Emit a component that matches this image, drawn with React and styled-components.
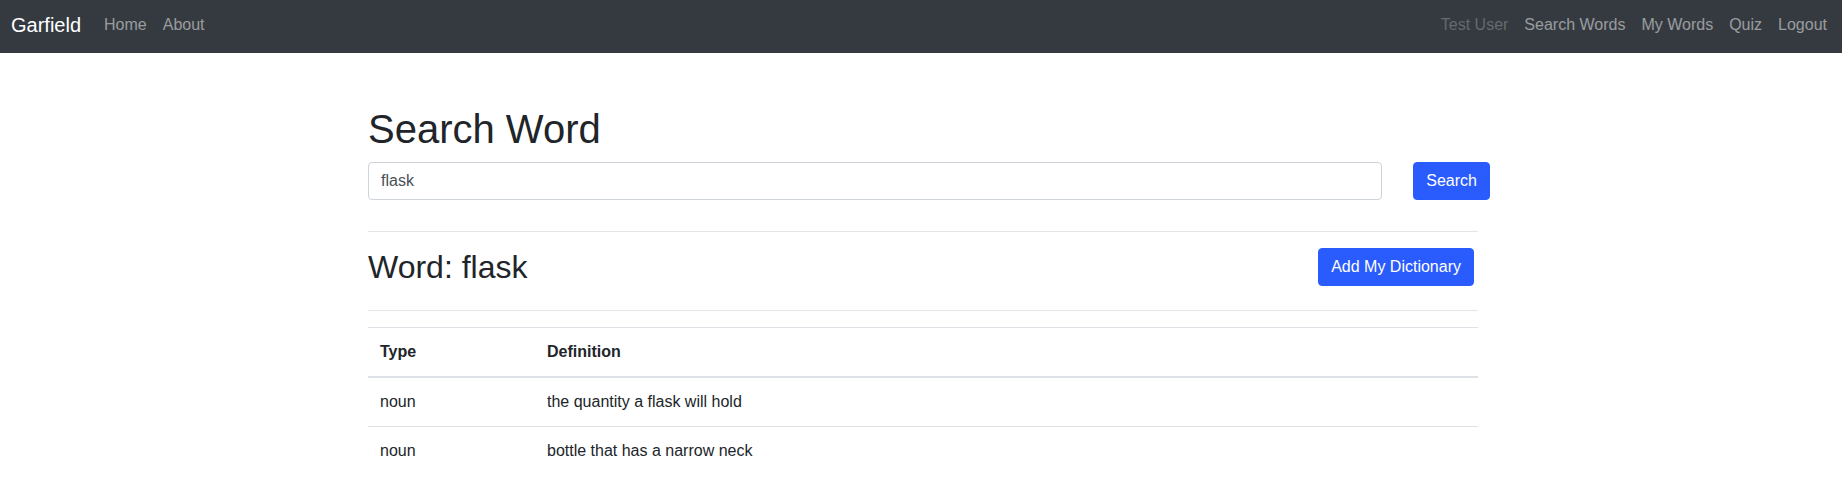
import styled, { createGlobalStyle } from "styled-components";

const GlobalStyle = createGlobalStyle`
    html, body {
        margin: 0;
        padding: 0;
        background: #fff;
        font-family: "Liberation Sans", Arial, sans-serif;
        font-size: 16px;
        line-height: 1.5;
        color: #212529;
    }
    * {
        box-sizing: border-box;
    }
`;

const definitions = [
    { type: "noun", text: "the quantity a flask will hold" },
    { type: "noun", text: "bottle that has a narrow neck" },
];

const App = () => {
    return (
        <>
            <GlobalStyle />
            <Navbar>
                <Brand href="#">Garfield</Brand>
                <NavList>
                    <NavLink href="#">Home</NavLink>
                    <NavLink href="#">About</NavLink>
                </NavList>
                <NavList right>
                    <NavLink disabled>Test User</NavLink>
                    <NavLink href="#">Search Words</NavLink>
                    <NavLink href="#">My Words</NavLink>
                    <NavLink href="#">Quiz</NavLink>
                    <NavLink href="#">Logout</NavLink>
                </NavList>
            </Navbar>

            <Main>
                <Title>Search Word</Title>
                <SearchForm onSubmit={(e) => e.preventDefault()}>
                    <Input type="text" defaultValue="flask" />
                    <Button type="submit">Search</Button>
                </SearchForm>

                <Rule />

                <WordRow>
                    <WordTitle>Word: flask</WordTitle>
                    <Button type="button" offset="4px">
                        Add My Dictionary
                    </Button>
                </WordRow>

                <Rule />

                <Table>
                    <thead>
                        <tr>
                            <Th width="167px">Type</Th>
                            <Th>Definition</Th>
                        </tr>
                    </thead>
                    <tbody>
                        {definitions.map((d, i) => (
                            <tr key={i}>
                                <Td>{d.type}</Td>
                                <Td>{d.text}</Td>
                            </tr>
                        ))}
                    </tbody>
                </Table>
            </Main>
        </>
    );
};

export default App;

const Navbar = styled.nav`
    display: flex;
    align-items: center;
    height: 53px;
    padding: 0 7px 4px 11px;
    background-color: #343a40;
`;

const Brand = styled.a`
    font-size: 20px;
    line-height: 30px;
    color: #fff;
    text-decoration: none;
    margin-right: 15px;
`;

const NavList = styled.div`
    display: flex;
    align-items: center;
    margin-left: ${(props) => (props.right ? "auto" : "0")};
`;

const NavLink = styled.a`
    padding: 8px;
    font-size: 16px;
    line-height: 24px;
    text-decoration: none;
    color: ${(props) =>
        props.disabled ? "rgba(255, 255, 255, 0.25)" : "rgba(255, 255, 255, 0.5)"};
`;

const Main = styled.main`
    width: 1110px;
    margin: 0 auto;
    padding-top: 52px;
    position: relative;
    left: 2px;
`;

const Title = styled.h1`
    font-size: 40px;
    font-weight: 500;
    line-height: 1.2;
    margin: 0 0 9px;
`;

const SearchForm = styled.form`
    display: flex;
    gap: 31px;
    margin: 0 -12px 31px 0;
`;

const Input = styled.input`
    flex: 1;
    height: 38px;
    padding: 6px 12px;
    font-family: inherit;
    font-size: 16px;
    line-height: 1.5;
    color: #495057;
    background: #fff;
    border: 1px solid #ced4da;
    border-radius: 4px;
    outline: none;
`;

const Button = styled.button`
    height: 38px;
    padding: 6px 12px;
    margin-right: ${(props) => props.offset || "0"};
    font-family: inherit;
    font-size: 16px;
    line-height: 1.5;
    color: #fff;
    background-color: #2a5bfd;
    border: 1px solid #2a5bfd;
    border-radius: 4px;
    cursor: pointer;
    white-space: nowrap;
`;

const Rule = styled.hr`
    margin: 16px 0;
    border: 0;
    border-top: 1px solid rgba(0, 0, 0, 0.1);
`;

const WordRow = styled.div`
    display: flex;
    align-items: flex-start;
    justify-content: space-between;
`;

const WordTitle = styled.h2`
    font-size: 32px;
    font-weight: 500;
    line-height: 1.2;
    margin: 0 0 8px;
`;

const Table = styled.table`
    width: 100%;
    border-collapse: collapse;
    color: #212529;
    margin: 0;
`;

const Th = styled.th`
    width: ${(props) => props.width || "auto"};
    padding: 12px;
    text-align: left;
    vertical-align: bottom;
    font-weight: 700;
    border-top: 1px solid #dee2e6;
    border-bottom: 2px solid #dee2e6;
`;

const Td = styled.td`
    padding: 12px;
    vertical-align: top;
    border-top: 1px solid #dee2e6;
`;
